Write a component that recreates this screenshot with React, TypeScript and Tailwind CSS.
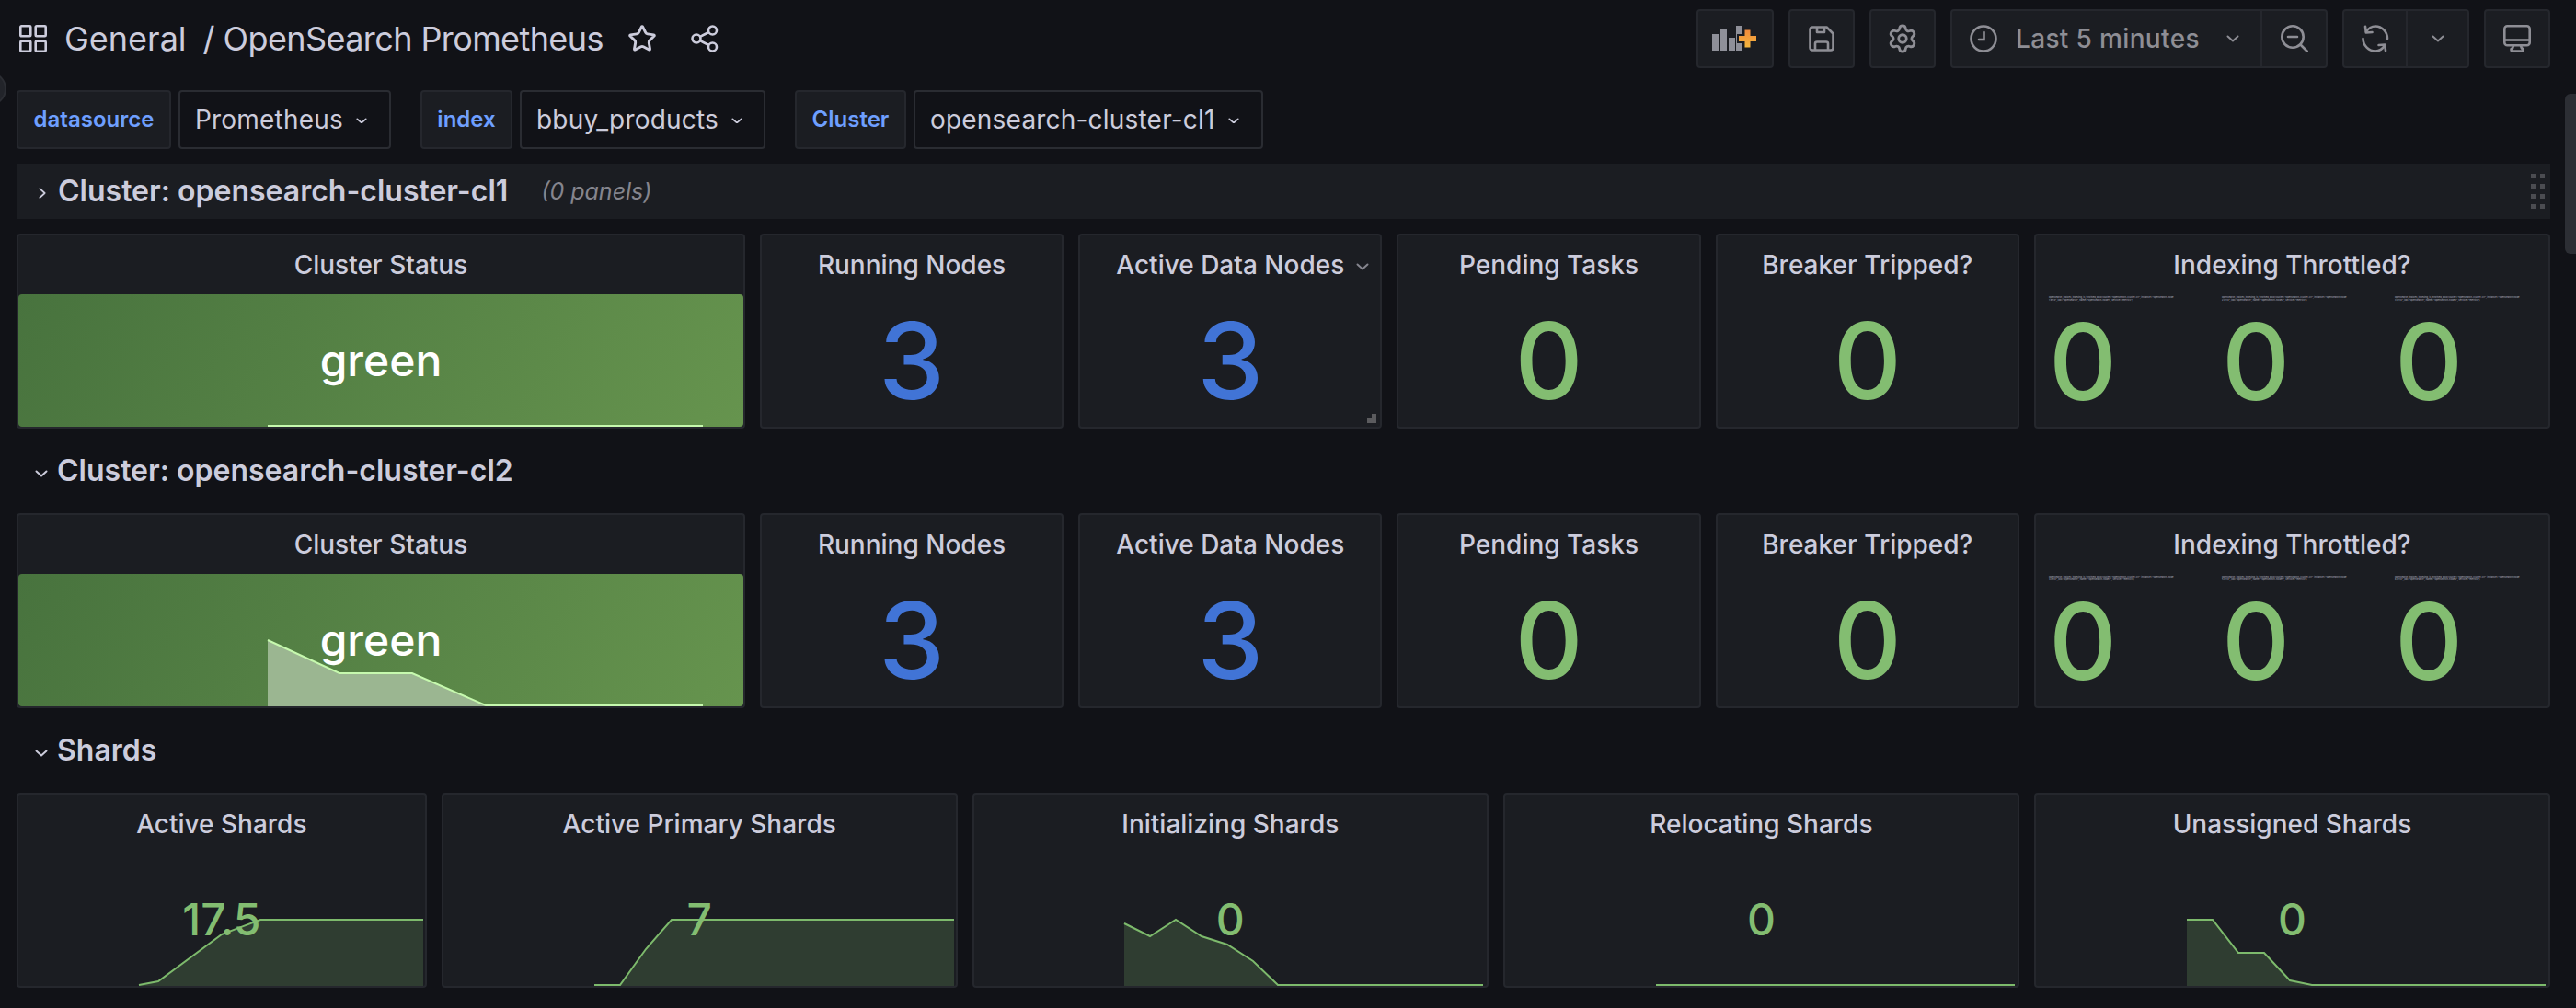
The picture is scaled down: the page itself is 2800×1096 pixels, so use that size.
import React from "react";
import { Settings, Star } from "lucide-react";

// a sparkline given in page pixels, moved into the panel by its origin
type Point = [number, number];

const Chevron = ({ className = "" }: { className?: string }) => (
    <svg viewBox="0 0 14 8" className={className} fill="none" stroke="currentColor" strokeWidth={2} strokeLinecap="round" strokeLinejoin="round">
        <path d="M1.5 1.5 7 6.5l5.5-5" />
    </svg>
);

const ChevronRight = ({ className = "" }: { className?: string }) => (
    <svg viewBox="0 0 9 14" className={className} fill="none" stroke="currentColor" strokeWidth={2} strokeLinecap="round" strokeLinejoin="round">
        <path d="M1.500 1.500 7.500 7l-6 5.500" />
    </svg>
);

const GridIcon = () => (
    <svg width={30} height={30} viewBox="0 0 30 30" fill="none" stroke="#ccccdc" strokeWidth={2.6}>
        <rect x="1.300" y="1.300" width="11" height="11" rx="1" />
        <rect x="17.700" y="1.300" width="11" height="11" rx="1" />
        <rect x="1.300" y="17.700" width="11" height="11" rx="1" />
        <rect x="17.700" y="17.700" width="11" height="11" rx="1" />
    </svg>
);

const ShareIcon = () => (
    <svg width={30} height={30} viewBox="0 0 30 30" fill="none" stroke="#ccccdc" strokeWidth={2.6}>
        <circle cx="23.500" cy="6" r="4.500" />
        <circle cx="23.500" cy="24" r="4.500" />
        <circle cx="6" cy="15" r="4.500" />
        <path d="M10 12.800 19.500 8M10 17.200l9.500 4.800" />
    </svg>
);

const AddPanelIcon = () => (
    <svg width={50} height={28} viewBox="0 0 50 28">
        <defs>
            <linearGradient id="addPlus" x1="0" y1="0" x2="0" y2="1">
                <stop offset="0" stopColor="#f08a3c" />
                <stop offset="1" stopColor="#f5b73d" />
            </linearGradient>
        </defs>
        <g fill="#8f9099">
            <rect x="0" y="9" width="7" height="18" />
            <rect x="9" y="4" width="7" height="23" />
            <rect x="18" y="13" width="7" height="14" />
            <rect x="26" y="0" width="7" height="27" />
        </g>
        <path d="M27 9h6.500V2.500h10V9H50v10h-6.500v6.500h-10V19H27z" fill="#1b1d22" />
        <path d="M35.500 4.500h6V11H48v6h-6.500v6.500h-6V17H29v-6h6.500z" fill="url(#addPlus)" />
    </svg>
);

const SaveIcon = () => (
    <svg width={28} height={28} viewBox="0 0 28 28" fill="none" stroke="#8e8e95" strokeWidth={2.6} strokeLinejoin="round">
        <path d="M4 1.500h15.500l7 7V24a2.500 2.500 0 0 1-2.500 2.500H4A2.500 2.500 0 0 1 1.500 24V4A2.500 2.500 0 0 1 4 1.500z" />
        <path d="M9 1.500v5.500h8V1.500M7 26.500v-7a2 2 0 0 1 2-2h10a2 2 0 0 1 2 2v7" />
    </svg>
);

const ClockIcon = () => (
    <svg width={30} height={30} viewBox="0 0 30 30" fill="none" stroke="#8e8e95" strokeWidth={2.6} strokeLinecap="round">
        <circle cx="15" cy="15" r="13.500" />
        <path d="M15.500 8v8H10" />
    </svg>
);

const ZoomOutIcon = () => (
    <svg width={30} height={30} viewBox="0 0 30 30" fill="none" stroke="#8e8e95" strokeWidth={2.6} strokeLinecap="round">
        <circle cx="13" cy="13" r="11.700" />
        <path d="M8 13h10M21.500 21.500 29 29" />
    </svg>
);

const SyncIcon = () => (
    <svg width={30} height={30} viewBox="0 0 30 30" fill="none" stroke="#8e8e95" strokeWidth={2.6} strokeLinecap="round" strokeLinejoin="round">
        <path d="M5 7.500C7.500 3.500 11 1.500 15 1.500c7 0 13 6 13 13.500" />
        <path d="M4 1.800 4.800 8.500 11.500 8" />
        <path d="M25 22.500c-2.500 4-6 6-10 6-7 0-13.500-6-13.500-13.500" />
        <path d="M26 28.200 25.200 21.500 18.500 22" />
    </svg>
);

const MonitorIcon = () => (
    <svg width={30} height={30} viewBox="0 0 30 30" fill="none" stroke="#8e8e95" strokeWidth={2.6} strokeLinejoin="round">
        <rect x="1.300" y="1.300" width="27.400" height="21" rx="3" />
        <path d="M1.300 16.500h27.400" />
        <path d="M11 22.500 10 25.500a1.500 1.500 0 0 0 0 3h10a1.500 1.500 0 0 0 0-3l-1-3" />
    </svg>
);

const ToolButton = ({ className = "", children }: { className?: string; children: React.ReactNode }) => (
    <div className={`flex h-16 items-center justify-center rounded-[4px] border-2 border-[#25272d] bg-[#1b1d22] ${className}`}>{children}</div>
);

const Variable = ({ label, value, labelWidth, valueWidth }: { label: string; value: string; labelWidth: string; valueWidth: string }) => (
    <div className="flex gap-2">
        <div className={`flex h-16 items-center justify-center rounded-[4px] border-2 border-[#25272d] bg-[#1b1d22] text-[24px] font-semibold text-[#6e9fff] ${labelWidth}`}>
            {label}
        </div>
        <div className={`flex h-16 items-center rounded-[4px] border-2 border-[#2a2c32] bg-[#111217] pl-[16px] text-[28px] tracking-[0.2px] text-[#ccccdc] ${valueWidth}`}>
            <span>{value}</span>
            <Chevron className="ml-[14px] mt-[2px] w-[12px] text-[#ccccdc]" />
        </div>
    </div>
);

const RowTitle = ({ title, collapsed }: { title: string; collapsed?: boolean }) => (
    <div className={`col-span-full flex h-[60px] items-center ${collapsed ? "bg-[#1b1d22]" : ""}`}>
        {collapsed ? (
            <ChevronRight className="ml-[24px] mr-[13px] mt-[4px] h-[14px] w-[8px] text-[#ccccdc]" />
        ) : (
            <Chevron className="ml-[20px] mr-[10px] mt-[6px] w-[14px] text-[#ccccdc]" />
        )}
        <span className="text-[32px] font-semibold text-[#ccccdc]">{title}</span>
        {collapsed && (
            <>
                <span className="ml-[36px] mt-[2px] text-[25px] italic text-[#85858e]">(0 panels)</span>
                <div className="ml-auto mr-[6px] grid grid-cols-2 gap-x-[5px] gap-y-[6px]">
                    {Array.from({ length: 8 }).map((_, i) => (
                        <div key={i} className="h-[5px] w-[5px] bg-[#4b4c51]" />
                    ))}
                </div>
            </>
        )}
    </div>
);

const Spark = ({ points, origin, fill, line }: { points: Point[]; origin: Point; fill: string; line: string }) => {
    const pts = points.map(([x, y]) => [x - origin[0], y - origin[1]] as Point);
    const bottom = 1072 - 862;
    const lineStr = pts.map((p) => p.join(",")).join(" ");
    const area = `${pts[0][0]},${bottom} ${lineStr} ${pts[pts.length - 1][0]},${bottom}`;
    return (
        <svg className="absolute inset-0 h-full w-full">
            <polygon points={area} fill={fill} />
            <polyline points={lineStr} fill="none" stroke={line} strokeWidth={2} />
        </svg>
    );
};

const Panel = ({ title, span, children, hover }: { title: string; span: string; children: React.ReactNode; hover?: boolean }) => (
    <div className={`relative flex h-[212px] flex-col rounded-[4px] border-2 border-[#25272d] bg-[#1b1d22] ${span}`}>
        <div className="relative z-10 flex h-16 shrink-0 items-center justify-center text-[28px] font-medium text-[#ccccdc]">
            {title}
            {hover && <Chevron className="absolute right-[12px] top-[30px] w-[14px] text-[#85858e]" />}
        </div>
        {children}
        {hover && <div className="absolute bottom-[4px] right-[4px] h-[10px] w-[10px] border-b-[5px] border-r-[5px] border-[#5b5b5e]" />}
    </div>
);

const BigStat = ({ title, value, color, span, hover }: { title: string; value: string; color: string; span: string; hover?: boolean }) => (
    <Panel title={title} span={span} hover={hover}>
        <div className={`flex flex-1 items-center justify-center text-[115px] font-medium leading-none ${color}`}>{value}</div>
    </Panel>
);

const StatusPanel = ({ origin, points }: { origin: Point; points: Point[] }) => (
    <Panel title="Cluster Status" span="col-span-7">
        <div className="relative flex flex-1 items-center justify-center overflow-hidden rounded-[4px] bg-[linear-gradient(120deg,#48733e,#66944e)]">
            <svg className="absolute inset-0 h-full w-full">
                <polygon points={`${points[0][0] - origin[0]},148 ${points.map(([x, y]) => `${x - origin[0]},${y - origin[1]}`).join(" ")} ${points[points.length - 1][0] - origin[0]},148`} fill="#9bb691" />
                <polyline points={points.map(([x, y]) => `${x - origin[0]},${y - origin[1]}`).join(" ")} fill="none" stroke="#c6f9ae" strokeWidth={2} />
            </svg>
            <span className="relative text-[48px] font-medium text-white">green</span>
        </div>
    </Panel>
);

const ThrottledPanel = ({ series }: { series: string[] }) => (
    <Panel title="Indexing Throttled?" span="col-span-5">
        <div className="grid flex-1 grid-cols-[repeat(3,188px)] overflow-hidden pl-[14px]">
            {series.map((s) => (
                <div key={s} className="flex flex-col pt-[2px]">
                    <div className="h-[6px] w-[137px] break-all text-[2.6px] leading-[3px] text-[#b4b4c0]">{s}</div>
                    <div className="mt-[8px] text-[115px] font-medium leading-none text-[#83bd71]">0</div>
                </div>
            ))}
        </div>
    </Panel>
);

const ShardPanel = ({ title, value, span, originX, points }: { title: string; value: string; span: string; originX: number; points: Point[] }) => (
    <Panel title={title} span={span}>
        <Spark points={points} origin={[originX + 2, 864]} fill="#2f3d31" line="#7dba6c" />
        <div className="relative flex flex-1 items-center justify-center text-[48px] font-medium leading-none text-[#83bd71]">{value}</div>
    </Panel>
);

const throttled = (node: string) => [
    `opensearch_indices_indexing_is_throttled_bool{cluster="opensearch-cluster-cl1", instance="${node}:9114", job="opensearch", name="${node}", service="metrics"}`,
];

const App: React.FC = () => {
    return (
        <div className="relative h-[1096px] w-[2800px] overflow-hidden bg-[#111217] font-[Inter,sans-serif]">
            <div className="absolute -left-[30px] top-[78px] h-[37px] w-[37px] rounded-full border-2 border-[#2b2d33] bg-[#22242a]" />
            <div className="absolute right-0 top-[102px] h-[174px] w-[12px] rounded-l-[6px] bg-[#2c2e34]" />

            <div className="flex h-[74px] items-end pl-[21px] pr-[28px]">
                <div className="flex h-16 flex-1 items-center text-[36px] text-[#ccccdc]">
                    <GridIcon />
                    <span className="ml-[19px]">General</span>
                    <span className="ml-[18px]">/</span>
                    <span className="ml-[9px] tracking-[-0.6px]">OpenSearch Prometheus</span>
                    <Star size={32} strokeWidth={2.2} className="ml-[26px] text-[#ccccdc]" />
                    <span className="ml-[37px]"><ShareIcon /></span>
                </div>
                <div className="flex gap-4">
                    <ToolButton className="w-[84px]"><AddPanelIcon /></ToolButton>
                    <ToolButton className="w-[72px]"><SaveIcon /></ToolButton>
                    <ToolButton className="w-[72px]"><Settings size={34} strokeWidth={2} className="text-[#8e8e95]" /></ToolButton>
                    <ToolButton className="w-[410px] justify-start">
                        <div className="flex h-full w-[337px] items-center border-r-2 border-[#25272d] pl-[19px] text-[28px] font-medium tracking-[0.35px] text-[#8e8e95]">
                            <ClockIcon />
                            <span className="ml-[20px]">Last 5 minutes</span>
                            <Chevron className="ml-[29px] w-[14px]" />
                        </div>
                        <div className="flex flex-1 items-center justify-center"><ZoomOutIcon /></div>
                    </ToolButton>
                    <ToolButton className="w-[138px] justify-start">
                        <div className="flex h-full w-[69px] items-center justify-center border-r-2 border-[#25272d]"><SyncIcon /></div>
                        <div className="flex flex-1 items-center justify-center"><Chevron className="w-[14px] text-[#8e8e95]" /></div>
                    </ToolButton>
                    <ToolButton className="w-[72px]"><MonitorIcon /></ToolButton>
                </div>
            </div>

            <div className="mt-6 flex gap-8 pl-[18px]">
                <Variable label="datasource" value="Prometheus" labelWidth="w-[168px]" valueWidth="w-[231px]" />
                <Variable label="index" value="bbuy_products" labelWidth="w-[100px]" valueWidth="w-[267px]" />
                <Variable label="Cluster" value="opensearch-cluster-cl1" labelWidth="w-[121px]" valueWidth="w-[380px]" />
            </div>

            <div className="ml-[18px] mt-4 grid w-[2754px] grid-cols-[repeat(24,minmax(0,1fr))] gap-4">
                <RowTitle title="Cluster: opensearch-cluster-cl1" collapsed />
                <StatusPanel origin={[20, 320]} points={[[291, 463], [764, 463]]} />
                <BigStat title="Running Nodes" value="3" color="text-[#4174d6]" span="col-span-3" />
                <BigStat title="Active Data Nodes" value="3" color="text-[#4174d6]" span="col-span-3" hover />
                <BigStat title="Pending Tasks" value="0" color="text-[#83bd71]" span="col-span-3" />
                <BigStat title="Breaker Tripped?" value="0" color="text-[#83bd71]" span="col-span-3" />
                <ThrottledPanel series={[...throttled("opensearch-node1"), ...throttled("opensearch-node2"), ...throttled("opensearch-node3")]} />

                <RowTitle title="Cluster: opensearch-cluster-cl2" />
                <StatusPanel origin={[20, 624]} points={[[291, 696], [369, 732], [448, 732], [528, 767], [764, 767]]} />
                <BigStat title="Running Nodes" value="3" color="text-[#4174d6]" span="col-span-3" />
                <BigStat title="Active Data Nodes" value="3" color="text-[#4174d6]" span="col-span-3" />
                <BigStat title="Pending Tasks" value="0" color="text-[#83bd71]" span="col-span-3" />
                <BigStat title="Breaker Tripped?" value="0" color="text-[#83bd71]" span="col-span-3" />
                <ThrottledPanel series={[...throttled("opensearch-node4"), ...throttled("opensearch-node5"), ...throttled("opensearch-node6")]} />

                <RowTitle title="Shards" />
                <ShardPanel title="Active Shards" value="17.5" span="col-span-4" originX={18} points={[[151, 1071], [172, 1067], [241, 1016], [283, 1000], [460, 1000]]} />
                <ShardPanel title="Active Primary Shards" value="7" span="col-span-5" originX={480} points={[[646, 1071], [674, 1071], [702, 1032], [730, 1000], [1037, 1000]]} />
                <ShardPanel title="Initializing Shards" value="0" span="col-span-5" originX={1057} points={[[1222, 1004], [1250, 1018], [1278, 1000], [1306, 1018], [1334, 1027], [1362, 1045], [1389, 1071], [1612, 1071]]} />
                <ShardPanel title="Relocating Shards" value="0" span="col-span-5" originX={1634} points={[[1800, 1071], [2190, 1071]]} />
                <ShardPanel title="Unassigned Shards" value="0" span="col-span-5" originX={2210} points={[[2376, 1000], [2404, 1000], [2432, 1036], [2460, 1036], [2488, 1066], [2512, 1071], [2766, 1071]]} />
            </div>
        </div>
    );
};

export default App;
